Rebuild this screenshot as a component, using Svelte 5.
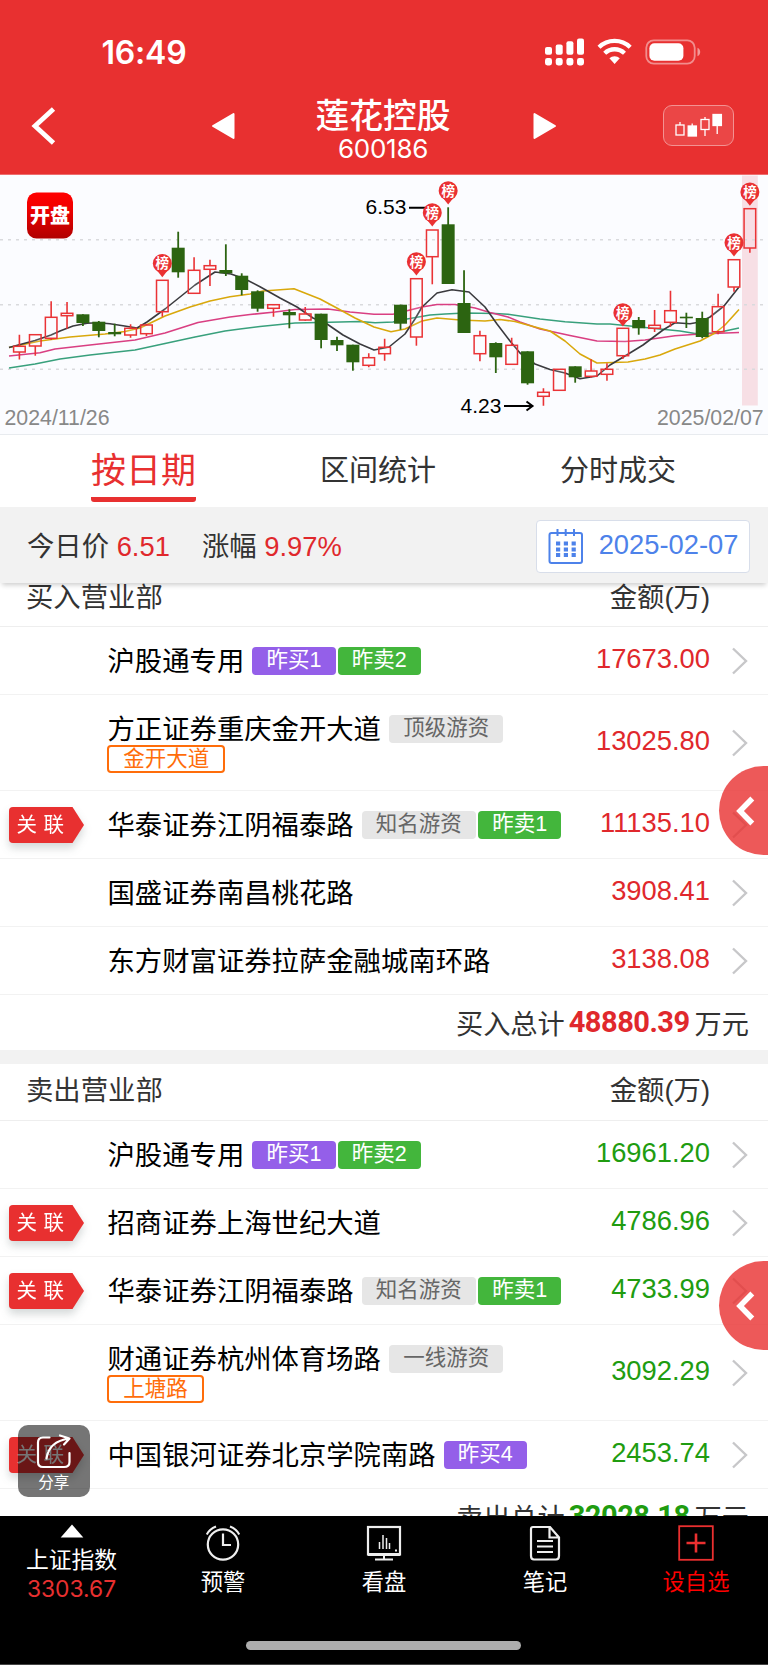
<script>
  // direction, body top, body bottom, high, low
  const candles = [
    ['r', 346.3, 352, 334.7, 359.5], ['r', 334.7, 346, 334.7, 355.7], ['r', 317.3, 338.3, 301.3, 340],
    ['r', 313.3, 315.7, 302, 328.7], ['g', 314.3, 323, 314.3, 326], ['g', 321.7, 331, 321, 337.3],
    ['g', 332, 334.3, 323.7, 336.3], ['r', 328.3, 335, 324.3, 337.7], ['r', 325, 333.7, 323.7, 336],
    ['r', 280.3, 311.7, 280.3, 316.7], ['g', 247.7, 272.3, 231.7, 277.7], ['r', 270.3, 293.3, 257.3, 294],
    ['r', 265.7, 269.3, 259.7, 286], ['g', 270, 273.3, 244.3, 276], ['g', 275.7, 290, 273.3, 295.3],
    ['g', 291.3, 308.7, 290.3, 311.7], ['r', 304.7, 308.3, 304, 316.7], ['g', 312, 315.3, 309.3, 328.3],
    ['r', 314, 320, 307, 320.7], ['g', 313.7, 340, 313.7, 348.3], ['g', 340, 345.3, 336.7, 351],
    ['g', 344.7, 362.3, 344.7, 370.7], ['r', 357.7, 365.3, 353.3, 367.3], ['r', 347.3, 353.7, 338.7, 360.7],
    ['g', 304.7, 323.7, 304.7, 329.7], ['r', 278.7, 337, 278.7, 345.7], ['r', 230, 256.7, 230, 284.3],
    ['g', 224.3, 284, 207.3, 284], ['g', 303, 333, 270.3, 333], ['r', 335.7, 353.7, 330.7, 361.3],
    ['g', 343, 357.3, 342.3, 373], ['r', 345.3, 364.3, 337.7, 365], ['g', 351.3, 383.3, 351.3, 384.7],
    ['r', 392.3, 396.3, 388.3, 405.7], ['r', 369.3, 390.3, 369.3, 390.3], ['g', 366.3, 377.3, 366.3, 382.7],
    ['r', 371, 376.3, 359.3, 377.7], ['r', 369.3, 374.3, 363.3, 380.7], ['r', 328.3, 355.7, 328.3, 359],
    ['g', 320, 328.3, 317, 334.7], ['r', 325.3, 328.3, 310, 332], ['r', 310.7, 322.3, 290.7, 326.7],
    ['g', 316.7, 318.3, 312.7, 328], ['g', 318, 337, 311.7, 338.3], ['r', 306.7, 331.7, 293.7, 334.3],
    ['r', 259.7, 287, 259.7, 291.7], ['r', 208.7, 248, 208.7, 252.7]
  ];
  const cx = (i) => 19.4 + i * 15.88;
  const pins = [[9, 276.7], [25, 275], [26, 226], [27, 204], [38, 326], [45, 256], [46, 205.3]];
  const averages = [
    { color: '#38a07c', points: '9,368 35,364 60,359 90,355 135,350 165,343.5 195,337 225,331 240,329 260,326.5 295,323 330,322.3 360,321.5 375,322.7 393,322 407,319 430,315 445,314 465,313 495,313.5 508,314.3 540,319 565,321.7 597,324 610,324 640,327 680,331 695,333.5 715,333 725,331 739,328' },
    { color: '#d93f82', points: '9,356 40,352.7 55,349 90,345 135,340 165,333 198,322.5 230,317 250,314.5 275,312 295,309.5 328,309 350,312 374,314.3 393,314.3 410,310 422,307 437,304.5 455,304.5 475,308 490,312.5 508,317 520,322 540,329 570,335.5 597,341 625,341.5 645,340 675,335.7 700,334 739,332.5' },
    { color: '#d9a80c', points: '9,347.5 40,341 70,337 105,334 125,331.5 140,328 165,316 190,307 210,301 230,296.7 250,294 263,291 294,288.7 320,299 335,307 355,318 374,327 391,331.7 405,329 422,321 437,318 460,320 485,321 500,319.5 515,321.5 535,327 550,331 565,341 580,354 597,363 628,362 645,359 660,355 675,349 700,341 715,333 725,325 739,309.5' },
    { color: '#3a3a3e', points: '9,347.5 35,340.5 51,335 60,331 73,326 87,323.3 98,322.7 110,323.7 123,325.7 137,328 147,322 165,309 195,285 215,272 231,274 245,279 260,286.7 280,298 297,307 313,318 327,324 343,335 360,344 374,350 389,347 405,334 415,319 422,307 437,293 452,289.7 469,292 485,307 497,324 510,341 520,353 535,364 550,369.5 565,373 580,378.7 597,376 610,365 625,356 643,345 663,330 675,322.7 690,323.7 700,322 710,317 724,306 739,287' }
  ];

  const sections = [
    {
      side: 'buy', title: '买入营业部', sumLabel: '买入总计', sum: '48880.39',
      rows: [
        { name: '沪股通专用', tags: [['purple', '昨买1'], ['green', '昨卖2']], amount: '17673.00' },
        { name: '方正证券重庆金开大道', tags: [['grey', '顶级游资']], alias: '金开大道', amount: '13025.80' },
        { linked: true, name: '华泰证券江阴福泰路', tags: [['grey', '知名游资'], ['green', '昨卖1']], amount: '11135.10' },
        { name: '国盛证券南昌桃花路', tags: [], amount: '3908.41' },
        { name: '东方财富证券拉萨金融城南环路', tags: [], amount: '3138.08' }
      ]
    },
    {
      side: 'sell', title: '卖出营业部', sumLabel: '卖出总计', sum: '32028.18',
      rows: [
        { name: '沪股通专用', tags: [['purple', '昨买1'], ['green', '昨卖2']], amount: '16961.20' },
        { linked: true, name: '招商证券上海世纪大道', tags: [], amount: '4786.96' },
        { linked: true, name: '华泰证券江阴福泰路', tags: [['grey', '知名游资'], ['green', '昨卖1']], amount: '4733.99' },
        { name: '财通证券杭州体育场路', tags: [['grey', '一线游资']], alias: '上塘路', amount: '3092.29' },
        { linked: true, name: '中国银河证券北京学院南路', tags: [['purple', '昨买4']], amount: '2453.74' }
      ]
    }
  ];
</script>

<div class="screen">
  <header>
    <div class="status">
      <span class="time">16:49</span>
      <svg class="indicators" width="160" height="30" viewBox="0 0 160 30" fill="#fff">
        {#each [[0, 9], [10.7, 6.5], [21.4, 3.2], [32, 0.5]] as [x, y]}
          <rect {x} {y} width="7" height={16.8 - y} rx="2" />
          <rect {x} y="20" width="7" height="7.4" rx="2.4" />
        {/each}
        <g fill="none" stroke="#fff" stroke-width="4.3">
          <path d="M54 9.2a22.5 22.5 0 0 1 31.2 0" />
          <path d="M59.7 15.2a14.4 14.4 0 0 1 19.8 0" />
        </g>
        <path d="M64.4 20.3a7.6 7.6 0 0 1 10.4 0L69.6 26z" />
        <rect x="101.3" y="2.3" width="48.4" height="23.4" rx="7.5" fill="none" stroke="#fff" stroke-opacity=".45" stroke-width="1.8" />
        <rect x="104.4" y="5.3" width="34" height="17.4" rx="5" />
        <path d="M152.5 9.8c3.6 1.4 3.6 7 0 8.4z" fill-opacity=".5" />
      </svg>
    </div>
    <div class="titlebar">
      <svg class="back" width="26" height="40" viewBox="0 0 26 40"><path d="M23.5 3L5 20l18.500 17" fill="none" stroke="#fff" stroke-width="4.8" /></svg>
      <svg class="prev" width="26" height="30" viewBox="0 0 26 30"><path d="M23.500 3v24L3 15z" fill="#fff" stroke="#fff" stroke-width="2" stroke-linejoin="round" /></svg>
      <div class="stock"><b>莲花控股</b><span>600186</span></div>
      <svg class="next" width="26" height="30" viewBox="0 0 26 30"><path d="M2.500 3v24L23 15z" fill="#fff" stroke="#fff" stroke-width="2" stroke-linejoin="round" /></svg>
      <div class="kbtn">
        <svg width="48" height="26" viewBox="0 0 48 26" fill="none" stroke="#fff" stroke-width="1.300">
          <rect x="1" y="13" width="8" height="10" /><path d="M5 10v3M17.200 11.500v3M30 5v3M30 18v6M42.200 14v8" />
          <rect x="13.200" y="14" width="8.200" height="10" fill="#fff" />
          <rect x="26" y="7.500" width="8" height="10" />
          <rect x="38" y="2.500" width="8.400" height="11" fill="#fff" />
        </svg>
      </div>
    </div>
  </header>

  <svg class="chart" width="768" height="260" viewBox="0 174 768 260">
    <defs>
      <linearGradient id="logo" x1="0" y1="0" x2="0" y2="1"><stop offset="0" stop-color="#ff0000" /><stop offset=".35" stop-color="#f00000" /><stop offset="1" stop-color="#b00000" /></linearGradient>
    </defs>
    <rect x="0" y="174" width="768" height=".7" fill="#e83030" />
    <rect x="742" y="175.500" width="15.800" height="230" fill="#f7dfe5" />
    {#each [239.700, 304.700, 369.200] as y}
      <line x1="0" x2="768" y1={y} y2={y} stroke="#d9dadd" stroke-width="1.500" stroke-dasharray="3 5" />
    {/each}
    {#each averages as line}
      <polyline points={line.points} fill="none" stroke={line.color} stroke-width="1.600" stroke-linejoin="round" />
    {/each}
    {#each candles as [dir, top, bottom, high, low], i}
      {#if dir === 'g'}
        <path d="M{cx(i)} {high}V{low}" stroke="#2c6411" stroke-width="1.800" />
        <rect x={cx(i) - 6.500} y={top} width="13" height={bottom - top} fill="#2c6411" />
      {:else}
        <path d="M{cx(i)} {high}V{top}M{cx(i)} {bottom}V{low}" stroke="#ea3336" stroke-width="1.600" />
        <rect x={cx(i) - 5.800} y={top} width="11.600" height={bottom - top} fill={i < 46 ? '#fcfcff' : '#f7dfe5'} fill-opacity=".12" stroke="#ea3336" stroke-width="1.500" />
      {/if}
    {/each}
    <path d="M409 207.800H425M504 406H532M526.500 401.500L532.500 406L526.500 410.500" fill="none" stroke="#000" stroke-width="2" />
    {#each pins as [i, tip]}
      <circle cx={cx(i)} cy={tip - 13.300} r="9.500" fill="#ea3132" />
      <path d="M{cx(i) - 5.500} {tip - 6.500}H{cx(i) + 5.500}L{cx(i)} {tip + 0.500}z" fill="#ea3132" />
      <text x={cx(i)} y={tip - 8.500} class="pin">榜</text>
    {/each}
    <text x="365.500" y="214.300" class="price">6.53</text>
    <text x="460.500" y="412.500" class="price">4.23</text>
    <text x="4.500" y="425.400" class="day">2024/11/26</text>
    <text x="657" y="425.400" class="day">2025/02/07</text>
    <rect x="27" y="192.500" width="46" height="46" rx="9.500" fill="url(#logo)" />
    <text x="50" y="223.300" class="open">开盘</text>
  </svg>

  <nav class="tabs">
    <span class="active">按日期</span><span>区间统计</span><span>分时成交</span>
  </nav>

  <div class="filter">
    <span>今日价 <em>6.51</em></span>
    <span class="change">涨幅 <em>9.97%</em></span>
    <div class="date">
      <svg width="36" height="37" viewBox="0 0 36 37" fill="none" stroke="#4d82ea" stroke-width="2">
        <rect x="1.500" y="5" width="32.500" height="30" rx="2" />
        <path d="M9.500 1v7M17.700 1v7M26 1v7" />
        <path d="M8 15.500h20M8 21.500h20M8 27h20" stroke-width="3.800" stroke-dasharray="4.200 3.600" />
      </svg>
      <span>2025-02-07</span>
    </div>
  </div>

  <main>
    {#each sections as s}
      <section class={s.side}>
        <div class="head"><span>{s.title}</span><span>金额(万)</span></div>
        {#each s.rows as r}
          <div class="row" class:tall={r.alias}>
            <div class="mark">
              {#if r.linked}
                <svg width="84" height="46" viewBox="0 0 84 46"><path d="M4 0H63.500L75 18L63.500 36H4Q0 36 0 32V4Q0 0 4 0z" fill="#e83030" /><text x="7.500" y="25">关</text><text x="34.500" y="25">联</text></svg>
              {/if}
            </div>
            <div class="who">
              <div class="line">
                <span class="name">{r.name}</span>
                {#each r.tags as [tone, label]}<span class="tag {tone}">{label}</span>{/each}
              </div>
              {#if r.alias}<span class="tag alias">{r.alias}</span>{/if}
            </div>
            <span class="amount">{r.amount}</span>
            <svg class="go" width="16" height="28" viewBox="0 0 16 28"><path d="M1 1.500L14 14L1 26.500" fill="none" stroke="#c7c7c9" stroke-width="2.400" /></svg>
          </div>
        {/each}
        <div class="sum"><span>{s.sumLabel}</span><b>{s.sum}</b><span>万元</span></div>
        <div class="drawer"><svg width="20" height="30" viewBox="0 0 20 30"><path d="M17.300 2.500L5 15l12.300 12.500" fill="none" stroke="#fff" stroke-width="5.500" /></svg></div>
      </section>
    {/each}
    <div class="share">
      <svg width="36" height="36" viewBox="0 0 36 36" fill="none" stroke="#fff" stroke-width="2.200" stroke-linecap="round" stroke-linejoin="round">
        <path d="M13.500 3.500H7Q2 3.500 2 8.500V28Q2 33 7 33H28Q33.500 33 33.500 28V19M10.500 24.500C12 14 19 6.500 33 4.500M24 1.500L33.500 4.500L28 10.500" />
      </svg>
      <span>分享</span>
    </div>
  </main>

  <footer>
    <div class="item index"><svg width="24" height="14" viewBox="0 0 24 14"><path d="M12 .500L23.300 13.500H.7z" fill="#fff" /></svg><span>上证指数</span><em>3303.67</em></div>
    <div class="item">
      <svg width="36" height="36" viewBox="0 0 36 36" fill="none" stroke="#eee" stroke-width="2.200"><circle cx="18" cy="19.500" r="15.200" /><path d="M18 8.500V20h8M1.800 9.500Q4.500 4 11 1.500M34.200 9.500Q31.500 4 25 1.500" /></svg>
      <span>预警</span>
    </div>
    <div class="item">
      <svg width="36" height="36" viewBox="0 0 36 36" fill="none" stroke="#eee" stroke-width="2.200"><rect x="2" y="2" width="32" height="27.500" /><path d="M9 34.500h18M18 29v5" stroke-width="2" /><path d="M2 29.500h32" stroke-width="3" /><path d="M13.500 24v-7M17 24V10M20.500 24V13M23.500 24v-6" stroke-width="1.500" /><path d="M29 25.500h2" /></svg>
      <span>看盘</span>
    </div>
    <div class="item">
      <svg width="36" height="36" viewBox="0 0 36 36" fill="none" stroke="#eee" stroke-width="2.200"><path d="M6 2H23L32 12.500V31Q32 34.500 29 34.500H7Q4 34.500 4 31V4Q4 2 6 2zM22.500 2V12.500H32" /><path d="M10 16h16M10 21.500h16M10 27h16" stroke-width="1.800" /></svg>
      <span>笔记</span>
    </div>
    <div class="item add">
      <svg width="36" height="36" viewBox="0 0 36 36" fill="none" stroke="#ea3030"><rect x="1.200" y="1.200" width="33.600" height="33.600" stroke-width="1.800" /><path d="M18 8.500v19M8.500 18h19" stroke-width="2.600" /></svg>
      <span>设自选</span>
    </div>
    <i></i>
  </footer>
</div>

<style>
  :global(body) { margin: 0; background: #fff; }
  * { box-sizing: border-box; }
  .screen { width: 768px; height: 1665px; display: flex; flex-direction: column; overflow: hidden; background: #fff; color: #333; font-family: "Liberation Sans", "Noto Sans CJK SC", sans-serif; font-size: 27.350px; white-space: nowrap; }
  svg { display: block; flex: none; }
  em { font-style: normal; }

  header { flex: none; height: 174px; background: #e83030; color: #fff; }
  .status { height: 96px; padding: 38px 67px 0 101.500px; display: flex; justify-content: space-between; align-items: flex-start; }
  .time { font: 600 32px/30px Inter, sans-serif; letter-spacing: -0.200px; }
  .indicators { margin-right: -4px; }
  .titlebar { height: 78px; display: flex; align-items: flex-start; }
  .back { margin: 10px 0 0 30px; }
  .prev { margin: 15px 0 0 154px; }
  .next { margin: 15px 0 0 0; }
  .stock { width: 296px; display: flex; flex-direction: column; align-items: center; }
  .stock b { font: 500 33.800px/36px "Noto Sans CJK SC", sans-serif; margin-left: -2px; }
  .stock span { font: 400 26px/28px Inter, sans-serif; letter-spacing: -0.250px; margin: 3px 0 0 -2px; }
  .kbtn { margin: 9px 0 0 105px; width: 71px; height: 41px; padding: 6px 0 0 11px; border: 1px solid #f39292; border-radius: 9px; background: #eb4646; }

  .chart { background: #fbfcff; }
  .pin { font: 700 13.500px "Noto Sans CJK SC", sans-serif; fill: #fff; text-anchor: middle; }
  .price { font-size: 21px; fill: #000; }
  .day { font-size: 21.300px; fill: #888; }
  .open { font: 900 20px "Noto Sans CJK SC", sans-serif; fill: #fff; text-anchor: middle; }

  .tabs { flex: none; height: 73px; border-top: 1px solid #e8ebef; padding: 0 92px 0 91px; display: flex; justify-content: space-between; align-items: flex-start; font-size: 29px; line-height: 73px; }
  .tabs span { height: 67px; }
  .tabs .active { width: 105px; color: #e83030; font-size: 35px; line-height: 72px; background: linear-gradient(#e83030, #e83030) no-repeat 0 100% / 100% 5.500px; border-radius: 3px; }

  .filter { flex: none; z-index: 1; height: 76px; padding: 2px 18.500px 0 27px; display: flex; align-items: center; background: #f2f2f2; box-shadow: 0 4px 5px -2px rgba(0, 0, 0, .2); }
  .filter > span { margin-top: -5px; }
  .filter em { color: #e0282c; }
  .filter .change { margin-left: 32px; }
  .date { margin-left: auto; width: 213.500px; height: 53px; padding: 0 10px 0 11px; display: flex; align-items: center; justify-content: space-between; border: 1.500px solid #d8deea; border-radius: 4px; background: #fff; color: #4d82ea; }
  .date span { margin-top: -3px; }

  main { flex: none; position: relative; height: 933px; overflow: hidden; }
  section { position: relative; }
  .sell { border-top: 14px solid #f2f2f2; }
  .head { height: 44px; padding: 0 58px 13px 26px; display: flex; justify-content: space-between; align-items: center; border-bottom: 1.500px solid #eee; line-height: 28px; }
  .sell .head { height: 57px; padding-bottom: 2px; }
  .row { height: 68px; padding: 0 20px 0 9px; display: flex; align-items: center; border-bottom: 1.500px solid #f2f2f2; }
  .row.tall { height: 96px; }
  .mark { width: 98.500px; height: 36px; }
  .mark svg { filter: drop-shadow(0 5px 4px rgba(40, 60, 60, .2)); }
  .mark text { font-size: 20.500px; fill: #fff; }
  .who { flex: 1; }
  .tall .who { margin-top: 2px; }
  .line { display: flex; align-items: center; height: 30px; }
  .name { color: #000; margin: -4px 6px 0 0; }
  .tag { display: inline-block; height: 28px; margin-left: 2px; padding: 0 14.200px; border-radius: 4px; font-size: 21.500px; line-height: 27.500px; color: #fff; }
  .purple { background: #945fe9; }
  .green { background: #43b63c; }
  .grey { background: #e6e6e6; color: #666; }
  .alias { display: block; width: max-content; margin: 1px 0 0 -0.500px; border: 2px solid #ff6d0a; color: #ff6d0a; line-height: 24px; }
  .amount { color: #e0282c; margin-top: -3px; }
  .sell .amount { color: #209c10; }
  .go { margin-left: 22px; }
  .sum { height: 55px; padding: 0 19px 2px 0; display: flex; justify-content: flex-end; align-items: center; font-size: 27.200px; }
  .sum b { font: 700 29px/30px Roboto, sans-serif; letter-spacing: -0.500px; margin: 0 5px 0 4px; color: #e0282c; }
  .sell .sum b { color: #209c10; }
  .drawer { position: absolute; right: 0; top: 183px; width: 49px; height: 89px; padding: 30px 0 0 16px; border-radius: 45px 0 0 45px; background: rgba(232, 48, 48, .8); }
  .sell .drawer { top: 197px; }
  .share { position: absolute; left: 18px; top: 842px; width: 71.500px; height: 72px; padding-top: 9px; border-radius: 10px; background: rgba(0, 0, 0, .54); color: #fff; display: flex; flex-direction: column; align-items: center; font-size: 15.500px; line-height: 26px; }

  footer { flex: none; height: 149px; background: #000; border-bottom: 1px solid #444; color: #fff; display: grid; grid-template-columns: 143px 160px 162px 160px 142px; grid-template-rows: 125px 9px; }
  .item { padding-top: 9px; display: flex; flex-direction: column; align-items: center; font-size: 22.300px; line-height: 30px; }
  .item span { margin-top: 7px; }
  .index { padding-top: 8px; font-size: 22.800px; }
  .index em { font: 400 22.800px/30px Inter, sans-serif; letter-spacing: 0; color: #e83030; margin-top: -1px; }
  .add { color: #ff0000; }
  footer i { grid-column: 1 / -1; justify-self: center; width: 275px; height: 9px; border-radius: 5px; background: #adadad; }
</style>
